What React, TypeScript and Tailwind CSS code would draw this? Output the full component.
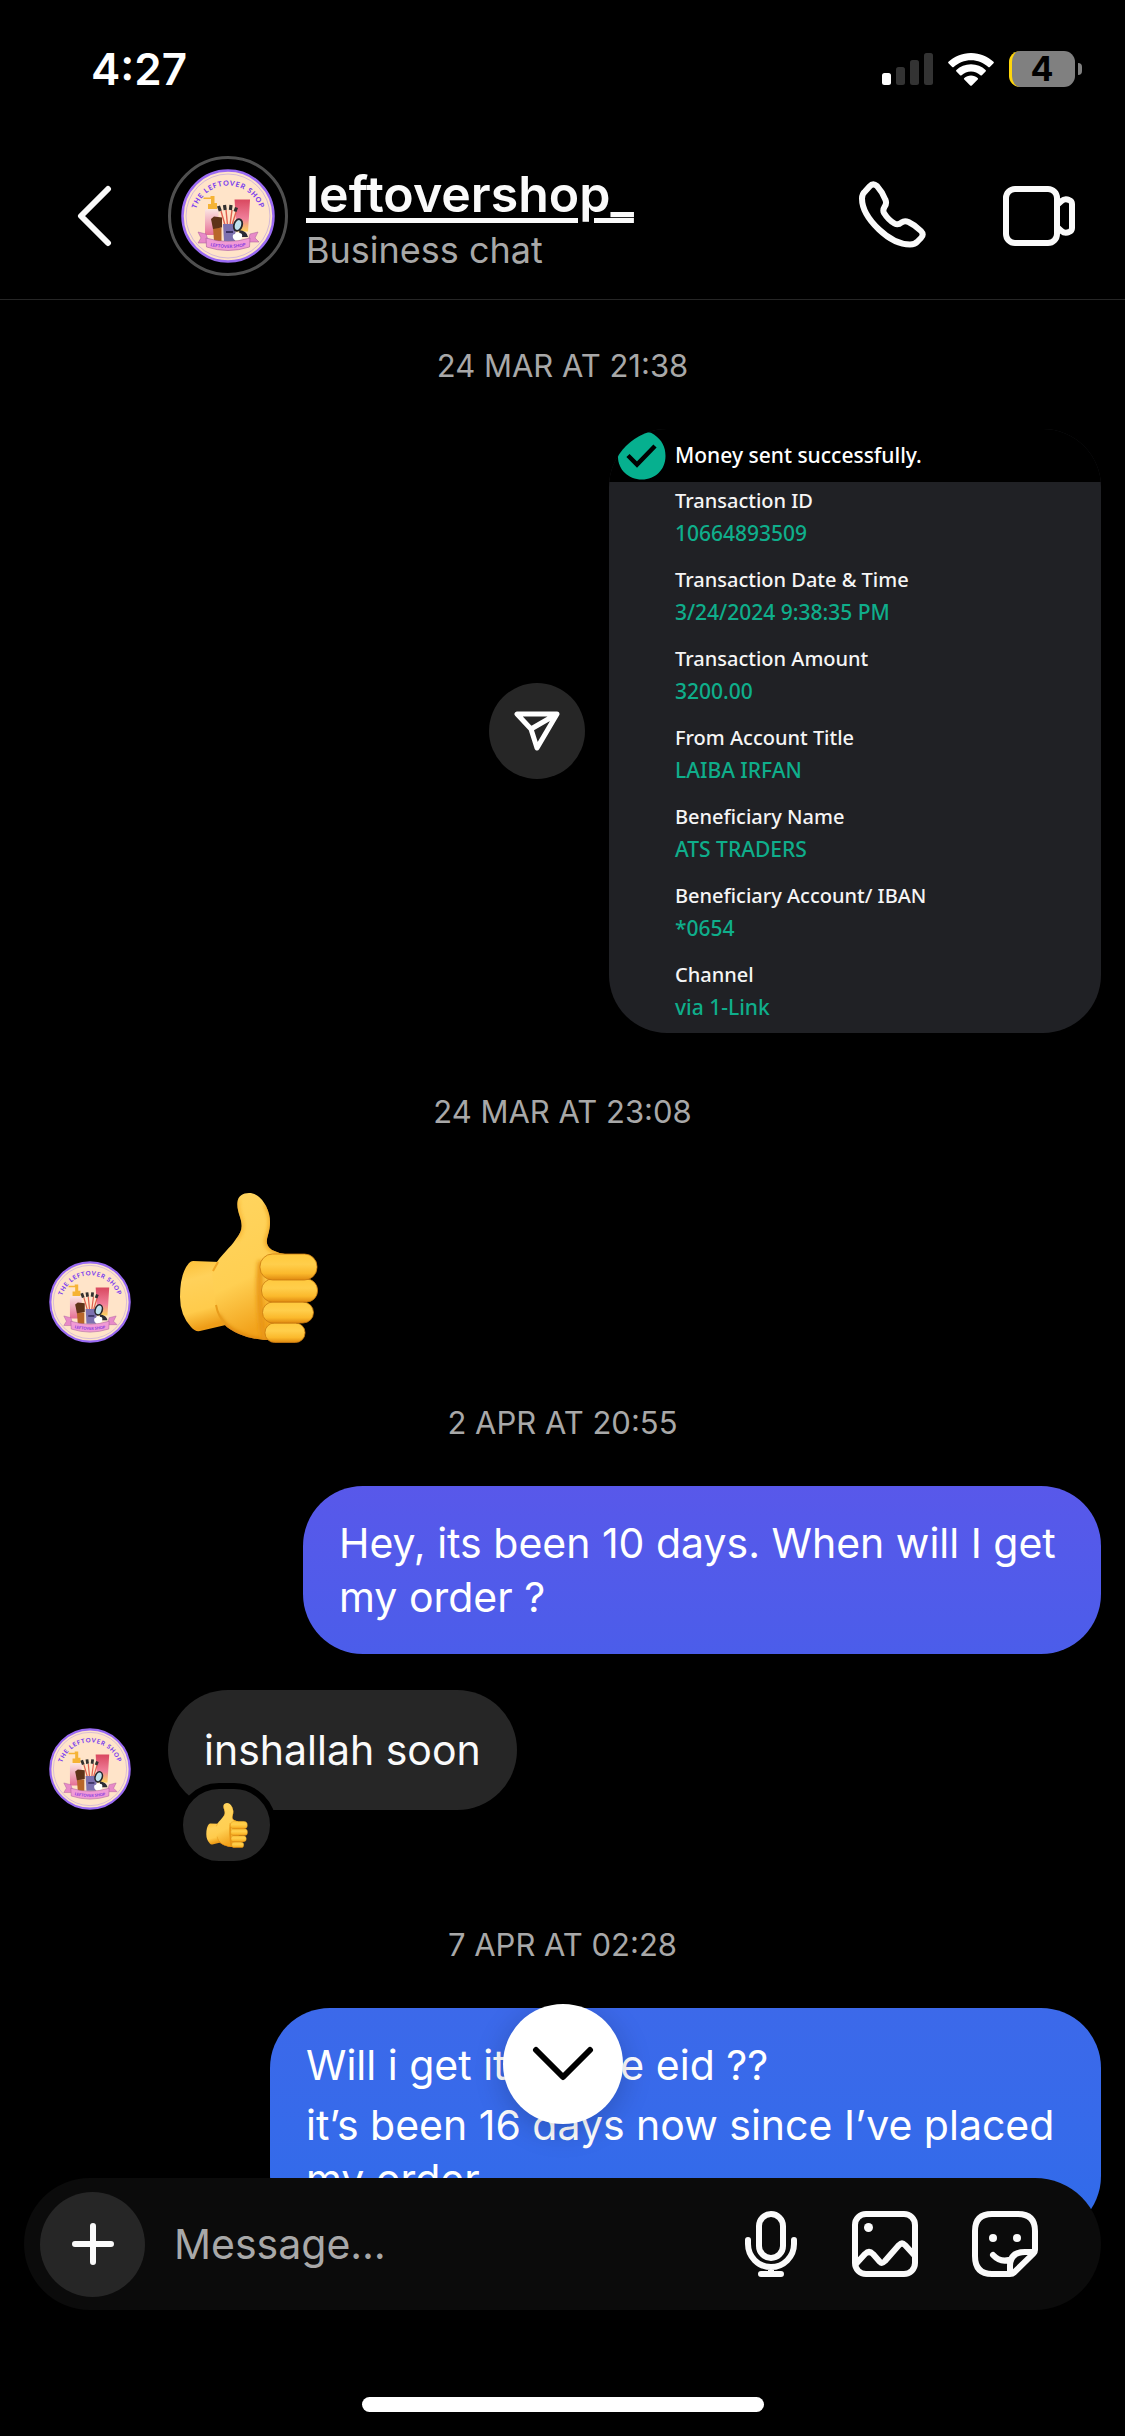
import type { ReactNode } from 'react';

const details = [
	{ label: 'Transaction ID', value: '10664893509' },
	{ label: 'Transaction Date & Time', value: '3/24/2024 9:38:35 PM' },
	{ label: 'Transaction Amount', value: '3200.00' },
	{ label: 'From Account Title', value: 'LAIBA IRFAN' },
	{ label: 'Beneficiary Name', value: 'ATS TRADERS' },
	{ label: 'Beneficiary Account/ IBAN', value: '*0654' },
	{ label: 'Channel', value: 'via 1-Link' },
];

const ShopLogo = ({ id, className }: { id: string; className: string }) => (
	<svg viewBox="0 0 94 94" className={className} role="img" aria-label="The Leftover Shop">
		<defs>
			<path id={`${id}-arc`} d="M13.500 50a33.500 33.500 0 0 1 67 0" />
			<path id={`${id}-ribbon`} d="M24 75.500q23 7 46 0" />
			<linearGradient id={`${id}-tube`} x1="0" y1="0" x2="0" y2="1">
				<stop offset="0" stopColor="#d9485f" />
				<stop offset=".6" stopColor="#f07f9a" />
				<stop offset="1" stopColor="#fbd45c" />
			</linearGradient>
			<linearGradient id={`${id}-bottle`} x1="0" y1="0" x2="0" y2="1">
				<stop offset="0" stopColor="#fbe6e2" />
				<stop offset="1" stopColor="#e66f96" />
			</linearGradient>
		</defs>
		<circle cx="47" cy="47" r="45.5" fill="#ffe4c9" stroke="#9a6bf3" strokeWidth="2.500" />
		<circle cx="47" cy="47" r="42" fill="none" stroke="#b79be0" strokeWidth=".6" />
		<text fill="#7c3fee" fontSize="7" fontWeight="900" fontFamily="Lato, sans-serif">
			<textPath href={`#${id}-arc`} startOffset="50%" textAnchor="middle" letterSpacing="0.8">
				THE LEFTOVER SHOP
			</textPath>
		</text>
		<path d="M22.500 28.500h7v-1.500h4v7h2.500v6h-9v-5h3v-5h-7.500z" fill="#f5b335" />
		<path d="M24 41q1-1 2.500-1h9q2 0 2 2v24h-13.500z" fill={`url(#${id}-bottle)`} />
		<path d="M53.500 30.500h15.500l-2 32h-11.500z" fill={`url(#${id}-tube)`} />
		<g stroke="#e0604f" strokeWidth="1.400">
			<path d="M40 42l4 14M45 41l1.500 15M51 41l-2 15M55 43l-4 13" />
		</g>
		<g stroke="#33302f" strokeWidth="3.200">
			<path d="M37.500 37l1.800 5M43.500 36l.7 5M50 36l-.6 5M55.500 38.500l-1.500 4" />
		</g>
		<path d="M42 55h13l-1 17H43z" fill="#7d71b0" />
		<path d="M45 63h7" stroke="#3a3263" strokeWidth="2" />
		<path d="M32 59h8.500v13H33z" fill="#b86629" />
		<path d="M30 50l3-2.500 8 1v10l-9 1.500z" fill="#5e3218" />
		<path d="M58 61q8 1 9 7h-8z" fill="#2b2b35" />
		<ellipse cx="57" cy="56" rx="4" ry="6" fill="#bfe3ee" stroke="#26262c" strokeWidth="1.800" transform="rotate(18 57 56)" />
		<path d="M52 69q-1-4 2-4 1-3 4-1 4 0 3 4 0 3-4 3-4 1-5-2z" fill="#fff" />
		<path d="M25 65l-8-2 3 6-3 5h11zM69 65l8-2-3 6 4 4H67z" fill="#e88ac8" stroke="#a65b9a" strokeWidth=".5" />
		<path d="M25 69q22 7 44 0l-.5 9q-21.500 7-43 0z" fill="#f19ad6" stroke="#a65b9a" strokeWidth=".6" />
		<text fill="#8a3fe0" fontSize="4.500" fontWeight="900" fontFamily="Lato, sans-serif">
			<textPath href={`#${id}-ribbon`} startOffset="50%" textAnchor="middle">
				LEFTOVER SHOP
			</textPath>
		</text>
	</svg>
);

const ThumbsUp = ({ id, className }: { id: string; className: string }) => (
	<svg viewBox="0 0 138 150" className={className} role="img" aria-label="Thumbs up">
		<defs>
			<linearGradient id={`${id}-palm`} x1="0" y1="0" x2=".25" y2="1">
				<stop offset="0" stopColor="#ffd560" />
				<stop offset=".65" stopColor="#ffcf52" />
				<stop offset="1" stopColor="#f2a31c" />
			</linearGradient>
			<linearGradient id={`${id}-wrist`} x1="0" y1="0" x2=".2" y2="1">
				<stop offset="0" stopColor="#fcbf36" />
				<stop offset=".3" stopColor="#ffd15a" />
				<stop offset=".75" stopColor="#ffcb4b" />
				<stop offset="1" stopColor="#ee9d18" />
			</linearGradient>
			<linearGradient id={`${id}-finger`} x1="0" y1="0" x2="0" y2="1">
				<stop offset="0" stopColor="#ffc93d" />
				<stop offset=".4" stopColor="#ffce4b" />
				<stop offset=".75" stopColor="#fbb92c" />
				<stop offset="1" stopColor="#e08a10" />
			</linearGradient>
			<filter id={`${id}-soft`} x="-20%" y="-20%" width="140%" height="140%">
				<feGaussianBlur stdDeviation="2" />
			</filter>
			<clipPath id={`${id}-clip`}>
				<path d="M37 69C43 60 50 55 56 46C62 38 63 34 60 24C58 18 57 14 57.500 9C58 3 63 0 69 0C76 0 82 5 86 13C91 23 91 32 88 42C86 48 86 53 92 57Q98 60 105 61L110 100L100 147Q74 148 59 141Q48 136 44 131L30 100Z" />
			</clipPath>
		</defs>
		<path d="M13 68L40 69L50 131L20 138Q15 139 11 134Q0 122 0 104Q0 80 9 70Q11 68 13 68Z" fill={`url(#${id}-wrist)`} />
		<path d="M37 69C43 60 50 55 56 46C62 38 63 34 60 24C58 18 57 14 57.500 9C58 3 63 0 69 0C76 0 82 5 86 13C91 23 91 32 88 42C86 48 86 53 92 57Q98 60 105 61L110 100L100 147Q74 148 59 141Q48 136 44 131Q36 121 35 108L32 80Z" fill={`url(#${id}-palm)`} />
		<g clipPath={`url(#${id}-clip)`} fill="none" filter={`url(#${id}-soft)`} strokeWidth="4">
			<path d="M86 11C93 23 92 32 89 42C86 48 86 53 93 57L107 62" stroke="#eb9a14" />
			<path d="M37 122Q42 134 59 142Q74 149 100 148" stroke="#d97f0d" strokeWidth="5" />
			<path d="M81 68Q77 100 84 148" stroke="#e89516" strokeWidth="6" />
			<path d="M57 6Q57 18 61 28Q63 38 56 46" stroke="#f7ac26" strokeWidth="3" />
		</g>
		<path d="M33 78L38 69" stroke="#f0a524" strokeWidth="2" />
		<path d="M36 112Q38 123 45 131" fill="none" stroke="#e89c1c" strokeWidth="2" />
		<g fill={`url(#${id}-finger)`} stroke="#c97a10" strokeWidth=".8">
			<rect x="85" y="130" width="40" height="19.500" rx="9.500" />
			<rect x="82.500" y="109" width="51" height="21" rx="10.500" />
			<rect x="81.500" y="86" width="56" height="23" rx="11" />
			<rect x="80" y="61" width="57" height="26" rx="12.500" />
		</g>
	</svg>
);

const DateLabel = ({ children }: { children: ReactNode }) => (
	<p className="mb-[45px] text-center text-[31px] leading-9 text-[#a8a8a8]">{children}</p>
);

const StatusBar = () => (
	<div className="flex h-[132px] items-center justify-between pt-1.5 pr-[43px] pl-[91px]">
		<span className="text-[44px] leading-[54px] font-semibold text-white">4:27</span>
		<div className="flex items-center">
			<svg viewBox="0 0 51 32" className="h-8 w-[51px]" aria-hidden="true">
				<rect x="0" y="20" width="9" height="12" rx="2.500" fill="#fff" />
				<rect x="14" y="14" width="9" height="18" rx="2.500" fill="#333" />
				<rect x="28" y="7" width="9" height="25" rx="2.500" fill="#333" />
				<rect x="42" y="0" width="9" height="32" rx="2.500" fill="#333" />
			</svg>
			<svg viewBox="0 0 46 33" className="ml-[15px] h-[33px] w-[46px]" fill="#fff" aria-hidden="true">
				<path d="M23 0C32 0 40 3.500 45.500 8.800Q46.200 9.500 45.500 10.300L41.800 14Q41 14.700 40.300 14C35.600 9.700 29.600 7.200 23 7.200S10.400 9.700 5.700 14Q5 14.700 4.200 14L.5 10.300Q-.2 9.500.5 8.800C6 3.500 14 0 23 0Z" />
				<path d="M23 11.300C28.700 11.300 33.800 13.400 37.600 17Q38.400 17.800 37.600 18.500L33.900 22.200Q33.200 22.900 32.400 22.200C29.900 19.900 26.600 18.500 23 18.500S16.100 19.900 13.600 22.200Q12.800 22.900 12.100 22.200L8.400 18.500Q7.600 17.800 8.400 17C12.200 13.400 17.300 11.300 23 11.300Z" />
				<path d="M23 22.600C25.600 22.600 28 23.600 29.700 25.100Q30.500 25.900 29.700 26.600L23.800 32.500Q23 33.200 22.200 32.500L16.300 26.600Q15.500 25.900 16.300 25.100C18 23.600 20.400 22.600 23 22.600Z" />
			</svg>
			<div className="ml-[15px] flex h-9 w-[66px] items-center justify-center rounded-[11px] border-l-3 border-[#ffd60a] bg-[#808080] pr-[3px]">
				<span className="text-[34px] leading-9 font-bold text-black">4</span>
			</div>
			<div className="ml-[3px] h-3 w-1 rounded-r-full bg-[#808080]" />
		</div>
	</div>
);

const Header = () => (
	<header className="flex h-[168px] items-center border-b border-[#262626] pr-[49px] pl-[77px]">
		<button type="button" aria-label="Back" className="h-[62px] w-[36px]">
			<svg viewBox="0 0 36 62" className="h-full w-full" fill="none" stroke="#fafafa" strokeWidth="6" strokeLinecap="round" strokeLinejoin="round">
				<path d="M31 4L4 31l27 27" />
			</svg>
		</button>
		<div className="ml-[55px] flex size-[120px] shrink-0 items-center justify-center rounded-full border-3 border-[#4f4f4f]">
			<ShopLogo id="header" className="size-[94px]" />
		</div>
		<div className="ml-[18px] flex-1 pt-1.5">
			<a href="#profile" className="block text-[50px] leading-[60px] font-semibold text-[#fafafa] underline decoration-5 underline-offset-6">
				leftovershop_
			</a>
			<p className="mt-1 text-[36px] leading-[45px] text-[#a8a8a8]">Business chat</p>
		</div>
		<button type="button" aria-label="Audio call" className="size-[72px]">
			<svg viewBox="0 0 72 72" className="h-full w-full" fill="none" stroke="#fafafa" strokeWidth="6" strokeLinejoin="round">
				<path d="M8 11.500Q5 14 5 18.500C5 29 12 40 22 49.500C32 59 43 64.500 53 64.500Q58 64.500 60.500 61.500L64 58Q67.500 54.500 64 51Q58 45 51.500 42Q47.500 40.500 44.500 42.500Q41 45.500 37.500 43.500C33 41 29.500 37 27 33Q25.500 30 27.500 27Q30 23.500 28.500 20Q25.500 12 20 6Q16 2.500 12.500 6.500Z" />
			</svg>
		</button>
		<button type="button" aria-label="Video call" className="ml-[73px] h-[62px] w-[74px]">
			<svg viewBox="0 0 74 62" className="h-full w-full" fill="none" stroke="#fafafa" strokeWidth="6" strokeLinejoin="round">
				<rect x="4" y="4" width="51" height="54" rx="9" />
				<path d="M55 20l4.500-4Q63 13 67 15Q70 16 70 19V43Q70 46 67 47Q63 49 59.500 46L55 42" />
			</svg>
		</button>
	</header>
);

const Receipt = () => (
	<section className="w-[492px] overflow-hidden rounded-[58px] bg-[#202125] font-['Noto_Sans',sans-serif] text-[21px] leading-[33px] font-medium">
		<div className="flex h-[53px] items-center bg-black pl-[9px]">
			<svg viewBox="0 0 48 48" className="size-12" aria-hidden="true">
				<path d="M24 1.500Q31-1.500 36 2.500C44 8 47.500 15 47.500 24C47.500 38 37 47.500 24 47.500C10 47.500 0 37 0 25Q0 22 2 19.500C7 11 14 5 24 1.500Z" fill="#06b08f" />
				<path d="M10 23.500l9 9L37 14" fill="none" stroke="#000" strokeWidth="4.500" />
			</svg>
			<h2 className="ml-[9px] text-white">Money sent successfully.</h2>
		</div>
		<dl className="flex flex-col gap-[13px] pt-0.5 pb-[9px] pl-[66px]">
			{details.map((item) => (
				<div key={item.label}>
					<dt className="text-[20px] text-[#f5f5f5]">{item.label}</dt>
					<dd className="text-[#0fae8b]">{item.value}</dd>
				</div>
			))}
		</dl>
	</section>
);

const Composer = () => (
	<footer className="absolute inset-x-0 bottom-0 px-6 pb-6">
		<form className="flex h-[132px] items-center rounded-full bg-[#0b0b0b] pr-[62px] pl-4">
			<button type="button" aria-label="Add" className="flex size-[105px] shrink-0 items-center justify-center rounded-full bg-[#262626]">
				<svg viewBox="0 0 42 42" className="size-[42px]" stroke="#fafafa" strokeWidth="6" strokeLinecap="round">
					<path d="M21 3v36M3 21h36" />
				</svg>
			</button>
			<input
				type="text"
				aria-label="Message"
				placeholder="Message…"
				className="ml-[29px] min-w-0 flex-1 bg-transparent text-[41px] leading-[54px] text-white outline-none placeholder:text-[#a8a8a8]"
			/>
			<button type="button" aria-label="Record voice message" className="h-[68px] w-[54px]">
				<svg viewBox="0 0 54 68" className="h-full w-full" fill="none" stroke="#fafafa" strokeWidth="6" strokeLinecap="round">
					<rect x="15" y="4" width="24" height="44" rx="12" />
					<path d="M4 30v4a23 23 0 0 0 46 0v-4M27 57v6M17 64h20" />
				</svg>
			</button>
			<button type="button" aria-label="Send photo" className="ml-[53px] size-[68px]">
				<svg viewBox="0 0 68 68" className="h-full w-full" fill="none" stroke="#fafafa" strokeWidth="6" strokeLinejoin="round">
					<rect x="4" y="4" width="60" height="60" rx="11" />
					<path d="M4 55l10-11Q18 40 22 44l7 8Q31 54 34 51L48 35Q51 32 54 35L64 46" />
					<circle cx="17.500" cy="17.500" r="4.500" fill="#fafafa" stroke="none" />
				</svg>
			</button>
			<button type="button" aria-label="Send sticker" className="ml-[52px] size-[68px]">
				<svg viewBox="0 0 68 68" className="h-full w-full" fill="none" stroke="#fafafa" strokeWidth="6" strokeLinejoin="round" strokeLinecap="round">
					<path d="M39 64H21Q4 64 4 46V21Q4 4 21 4H47Q64 4 64 21V40Q64 42 62.500 43.500L43 62.500Q41.500 64 39 64Z" />
					<path d="M39 63V56Q39 42 54 42H63M22 45Q29 52.500 38 50" />
					<circle cx="22" cy="28" r="4" fill="#fafafa" stroke="none" />
					<circle cx="46" cy="28" r="4" fill="#fafafa" stroke="none" />
				</svg>
			</button>
		</form>
		<div className="mx-auto mt-[87px] h-[15px] w-[402px] rounded-full bg-white" />
	</footer>
);

const App = () => {
	return (
		<div className="relative flex h-screen flex-col overflow-hidden bg-black font-[Inter,sans-serif]">
			<StatusBar />
			<Header />
			<main className="min-h-0 flex-1 overflow-hidden px-6 pt-12">
				<DateLabel>24 MAR AT 21:38</DateLabel>
				<div className="mb-[61px] flex items-center justify-end">
					<button type="button" aria-label="Forward" className="mr-6 flex size-24 items-center justify-center rounded-full bg-[#262626]">
						<svg viewBox="0 0 46 42" className="h-[42px] w-[46px]" fill="none" stroke="#fff" strokeWidth="5" strokeLinejoin="round">
							<path d="M3 4H43L23 38L17 19ZM17 19L43 4" />
						</svg>
					</button>
					<Receipt />
				</div>
				<DateLabel>24 MAR AT 23:08</DateLabel>
				<div className="mt-[63px] mb-[62px] flex items-end pl-[25px]">
					<ShopLogo id="first" className="size-[82px]" />
					<ThumbsUp id="big" className="ml-[49px] h-[150px] w-[138px]" />
				</div>
				<DateLabel>2 APR AT 20:55</DateLabel>
				<div className="mb-9 flex justify-end">
					<p className="w-[798px] rounded-[60px] bg-linear-to-b from-[#5858ea] to-[#4b5dea] px-9 py-[30px] text-[41px] leading-[54px] text-white">
						Hey, its been 10 days. When will I get my order ?
					</p>
				</div>
				<div className="mb-[117px] flex items-end pl-[25px]">
					<ShopLogo id="second" className="size-[82px]" />
					<div className="relative ml-[37px]">
						<p className="rounded-[60px] bg-[#262626] px-9 py-[33px] text-[41px] leading-[54px] text-[#fafafa]">inshallah soon</p>
						<div className="absolute top-[93px] left-[9px] flex h-[84px] w-[99px] items-center justify-center rounded-full border-6 border-black bg-[#262626]">
							<ThumbsUp id="reaction" className="h-[45px] w-[42px]" />
						</div>
					</div>
				</div>
				<DateLabel>7 APR AT 02:28</DateLabel>
				<div className="flex justify-end">
					<div className="flex w-[831px] flex-col gap-1.5 rounded-[60px] bg-linear-to-b from-[#3c69ea] to-[#306bea] px-9 py-[30px] text-[41px] leading-[54px] text-white">
						<p>Will i get it before eid ??</p>
						<p>it’s been 16 days now since I’ve placed my order</p>
					</div>
				</div>
			</main>
			<button
				type="button"
				aria-label="Scroll to latest"
				className="absolute bottom-[312px] left-1/2 flex size-[120px] -translate-x-1/2 items-center justify-center rounded-full bg-white shadow-[0_6px_30px_rgba(0,0,0,0.2)]">
				<svg viewBox="0 0 62 36" className="h-9 w-[62px]" fill="none" stroke="#000" strokeWidth="6" strokeLinecap="round" strokeLinejoin="round">
					<path d="M4 4l27 27L58 4" />
				</svg>
			</button>
			<Composer />
		</div>
	);
};

export default App;
